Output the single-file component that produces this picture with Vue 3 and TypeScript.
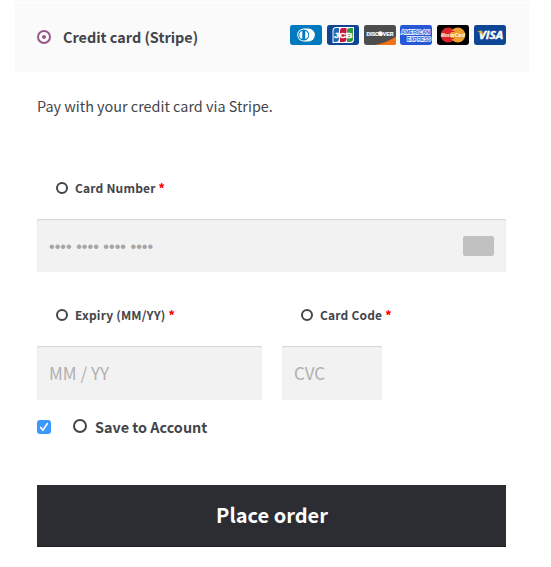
<script setup lang="ts">
import { ref } from 'vue'

const saveCard = ref<boolean>(true)
const cardNumber = ref<string>('')
const expiry = ref<string>('')
const cvc = ref<string>('')
</script>

<template>
  <main class="checkout">
    <div class="previous"></div>
    <header class="method">
      <span class="radio checked"></span>
      <span class="method-name">Credit card (Stripe)</span>
      <div class="cards">
        <svg viewBox="0 0 32 20" aria-label="Diners Club">
          <rect width="32" height="20" rx="2.4" fill="#0079be" />
          <path d="M14.2 3.500h4.200a6.500 6.500 0 0 1 0 13h-4.200z" fill="#fff" />
          <circle cx="13.700" cy="10" r="6.500" fill="#fff" />
          <circle cx="13.700" cy="10" r="5.500" fill="#0079be" />
          <path d="M12.300 5.900a4.300 4.300 0 0 0 0 8.200zM15.200 5.900a4.300 4.300 0 0 1 0 8.200z" fill="#fff" />
        </svg>
        <svg viewBox="0 0 32 20" aria-label="JCB">
          <rect width="32" height="20" rx="2.4" fill="#0e4595" />
          <path d="M9 2h18v12.500a3.500 3.500 0 0 1-3.500 3.500H5.500V5.500A3.500 3.500 0 0 1 9 2z" fill="#fff" />
          <path d="M9 3h3v10.500a3.500 3.500 0 0 1-3.500 3.500h-2V5.500A2.500 2.500 0 0 1 9 3z" fill="#2369b4" />
          <path d="M15.500 3h4v11a3 3 0 0 1-3 3h-3.500V5.500A2.500 2.500 0 0 1 15.500 3z" fill="#c9143e" />
          <path d="M22.500 3H26v11a3 3 0 0 1-3 3h-3V5.500A2.500 2.500 0 0 1 22.500 3z" fill="#319b42" />
          <text class="jcb" x="7" y="12.600" font-size="7" textLength="18.500" lengthAdjust="spacingAndGlyphs">JCB</text>
        </svg>
        <svg viewBox="0 0 32 20" aria-label="Discover">
          <rect width="32" height="20" rx="2.4" fill="#4d4d4d" />
          <path d="M32 11.500v6.100a2.400 2.400 0 0 1-2.400 2.400H11q12.500-2.500 21-8.500z" fill="#f47216" />
          <text class="discover" x="2.500" y="10.600" font-size="5.600" textLength="27" lengthAdjust="spacingAndGlyphs">DISCOVER</text>
          <circle cx="16.300" cy="8.600" r="2.300" fill="#fff" />
        </svg>
        <svg viewBox="0 0 32 20" aria-label="American Express">
          <rect width="32" height="20" rx="2.4" fill="#2557d6" />
          <g class="amex" transform="scale(1 1.250)">
            <text x="1" y="7.400" font-size="5" textLength="29" lengthAdjust="spacingAndGlyphs">AMERICAN</text>
            <text x="7" y="12.600" font-size="4.800" textLength="24" lengthAdjust="spacingAndGlyphs">EXPRESS</text>
          </g>
        </svg>
        <svg viewBox="0 0 32 20" aria-label="MasterCard">
          <rect width="32" height="20" rx="2.4" fill="#000" />
          <circle cx="11.200" cy="10" r="7.500" fill="#d9222a" />
          <circle cx="20.800" cy="10" r="7.500" fill="#ee9f2d" />
          <path d="M14.200 6.500h3.500M13.700 13.500h3.500" stroke="#d9222a" />
          <text class="mastercard" transform="scale(1 1.200)" x="4" y="10" font-size="4.600" textLength="24" lengthAdjust="spacingAndGlyphs">MasterCard</text>
        </svg>
        <svg viewBox="0 0 32 20" aria-label="Visa">
          <rect width="32" height="20" rx="2.4" fill="#0e4595" />
          <text class="visa" x="4.700" y="14.400" font-size="11.200" textLength="24.500" lengthAdjust="spacingAndGlyphs">VISA</text>
          <path d="M2.900 6.100h4.300q1 0 1.200 1.100l1.100 4.300Q7.600 7.700 2.900 6.100z" fill="#f2ae14" />
        </svg>
      </div>
    </header>

    <form class="payment" @submit.prevent>
      <p class="description">Pay with your credit card via Stripe.</p>

      <label class="field-label" for="number"><span class="radio small"></span><span>Card Number <b>*</b></span></label>
      <div class="input-box number-box">
        <input id="number" v-model="cardNumber" class="number" placeholder="•••• •••• •••• ••••" />
        <span class="card-type"></span>
      </div>

      <div class="row">
        <div class="expiry">
          <label class="field-label" for="expiry"><span class="radio small"></span><span>Expiry (MM/YY) <b>*</b></span></label>
          <div class="input-box"><input id="expiry" v-model="expiry" placeholder="MM / YY" /></div>
        </div>
        <div class="code">
          <label class="field-label" for="cvc"><span class="radio small"></span><span>Card Code <b>*</b></span></label>
          <div class="input-box"><input id="cvc" v-model="cvc" placeholder="CVC" /></div>
        </div>
      </div>

      <label class="save">
        <input v-model="saveCard" type="checkbox" class="save-input" />
        <span class="checkbox">
          <svg v-if="saveCard" viewBox="0 0 14 14"><path d="M3.600 7.400l2.300 2.700 4.500-6.600" /></svg>
        </span>
        <span class="radio save-radio"></span>
        <span class="save-text">Save to Account</span>
      </label>

      <button class="submit" type="submit"><span>Place order</span></button>
    </form>
  </main>
</template>

<style>
body { background: #fff; }
</style>

<style scoped>
* { box-sizing: border-box; }
.checkout {
  width: 514px;
  margin-left: 15px;
  color: #43454b;
  font-family: "Noto Sans CJK SC", "Noto Sans", sans-serif;
  font-size: 14.400px;
}
.previous { height: 2px; background: #fafafa; }
.method {
  display: flex;
  align-items: center;
  height: 69px;
  margin-top: 1px;
  padding: 0 23px 1px 22px;
  background: #fafafa;
}
.radio {
  display: flex;
  flex: none;
  width: 14px;
  height: 14px;
  border: 2px solid #43454b;
  border-radius: 50%;
}
.radio.small { width: 12px; height: 12px; }
.radio.checked { border-color: #96588a; align-items: center; justify-content: center; }
.radio.checked::after { content: ""; width: 4px; height: 4px; border-radius: 50%; background: #96588a; }
.method-name { margin-left: 12px; font-weight: 700; line-height: 24px; white-space: nowrap; }
.cards { display: flex; gap: 4.800px; margin: 0 0 4px auto; }
.cards svg { display: block; width: 32px; height: 20px; }
.cards text { fill: #fff; font-family: "Liberation Sans", sans-serif; font-weight: 700; }
.cards .visa, .cards .mastercard { font-style: italic; }
.cards .visa { font-family: "Open Sans", sans-serif; stroke: #fff; stroke-width: .400px; }
.cards .jcb { stroke: #fff; stroke-width: .400px; }
.cards .discover { stroke: #fff; stroke-width: .200px; }
.amex text { fill: #2557d6; stroke: #fff; stroke-width: 1.100px; paint-order: stroke; }
.payment { display: flex; flex-direction: column; padding: 0 23px 0 22px; }
.description { margin: 22px 0 0; height: 24px; line-height: 24px; }
.field-label {
  display: flex;
  align-items: center;
  gap: 7px;
  height: 20px;
  padding-left: 19px;
  font-size: 12px;
  letter-spacing: .180px;
  font-weight: 700;
  line-height: 20px;
  white-space: nowrap;
}
.field-label b { color: #f00; }
.payment > .field-label { margin-top: 60px; }
.input-box {
  display: flex;
  align-items: center;
  height: 54px;
  margin-top: 21px;
  padding: 0 12px;
  background: #f2f2f2;
  border-radius: 2px;
  box-shadow: inset 0 1px 1px rgba(0, 0, 0, .125), inset 0 0 1px rgba(0, 0, 0, .06);
}
.number-box { height: 53px; }
.input-box input {
  flex: 1;
  min-width: 0;
  width: 100%;
  padding: 0 0 2px;
  border: 0;
  outline: 0;
  background: none;
  color: #43454b;
  font-family: "Noto Sans CJK SC", sans-serif;
  font-size: 17px;
  font-weight: 400;
}
.input-box input::placeholder { color: #b0b0b0; opacity: 1; }
.input-box .number { padding: 2px 0 0; font-family: "Liberation Sans", sans-serif; font-size: 16.200px; }
.input-box .number::placeholder { color: #a5a5a5; }
.card-type { width: 31px; height: 20px; border-radius: 2px; background: #c1c1c1; }
.row { display: flex; gap: 20px; margin-top: 33px; }
.expiry { width: 225px; }
.code { width: 100px; }
.save { display: flex; align-items: center; height: 24px; margin-top: 15px; font-weight: 700; }
.save-input { position: absolute; opacity: 0; }
.checkbox { width: 14px; height: 14px; margin-right: 22px; border-radius: 3px; background: #3b99fc; }
.checkbox svg { display: block; width: 14px; height: 14px; }
.checkbox path { fill: none; stroke: #fff; stroke-width: 1.600; stroke-linecap: round; }
.save-radio { margin-bottom: 2px; }
.save-text { margin: 0 0 1px 8px; line-height: 24px; white-space: nowrap; }
.submit {
  height: 62px;
  margin-top: 46px;
  padding: 0 0 2px 1px;
  border: 0;
  border-bottom: 1px solid #211b22;
  background: #2c2d33;
  color: #fff;
  font-family: inherit;
  font-size: 20px;
  font-weight: 700;
  line-height: 30px;
}
</style>
